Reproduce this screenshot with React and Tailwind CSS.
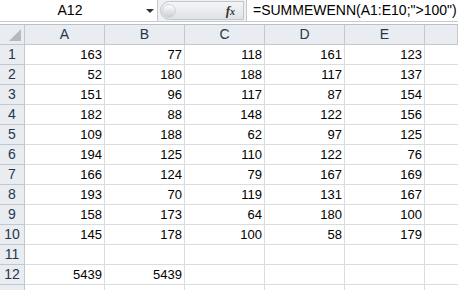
import React from "react";

const data = [
  [163, 77, 118, 161, 123],
  [52, 180, 188, 117, 137],
  [151, 96, 117, 87, 154],
  [182, 88, 148, 122, 156],
  [109, 188, 62, 97, 125],
  [194, 125, 110, 122, 76],
  [166, 124, 79, 167, 169],
  [193, 70, 119, 131, 167],
  [158, 173, 64, 180, 100],
  [145, 178, 100, 58, 179],
  [null, null, null, null, null],
  [5439, 5439, null, null, null],
  [null, null, null, null, null],
];

const cols = ["A", "B", "C", "D", "E", ""];

const App = () => {
  return (
    <div
      className="w-[458px] h-[290px] overflow-hidden bg-white text-[13px] text-black"
      style={{ fontFamily: '"Liberation Sans", Arial, sans-serif' }}
    >
      {/* Formula bar */}
      <div className="flex h-[22px] border-b border-[#c6c9cd]">
        <div className="relative w-[158px] bg-white border-r border-[#c6c9cd] flex items-center">
          <span className="w-[140px] text-center text-[14px]">A12</span>
          <span className="absolute left-[146px] top-[9px] w-0 h-0 border-l-[4px] border-r-[4px] border-t-[4px] border-l-transparent border-r-transparent border-t-[#333]"></span>
        </div>
        <div className="w-[88px] flex items-center bg-[#eef0f3]">
          <div className="ml-[2px] h-[19px] w-[84px] rounded-l-full bg-gradient-to-b from-[#f4f5f7] to-[#dfe2e6] border border-[#c2c6cc] flex items-center">
            <span className="ml-[1px] w-[14px] h-[14px] rounded-full bg-gradient-to-b from-[#ffffff] to-[#c9cdd3] border border-[#d0d3d8]"></span>
            <span
              className="ml-auto mr-[8px] italic font-bold text-[13px] text-[#333]"
              style={{ fontFamily: '"Liberation Serif", "Times New Roman", serif' }}
            >
              f<span className="text-[10px]">x</span>
            </span>
          </div>
        </div>
        <div className="flex-1 bg-white border-l border-[#c6c9cd] flex items-center pl-[6px] text-[14px]">
          =SUMMEWENN(A1:E10;"&gt;100")
        </div>
      </div>
      <div className="h-[3px] bg-white border-b border-[#b9c0c8]"></div>

      {/* Sheet */}
      <div className="grid grid-cols-[25px_80px_80px_80px_80px_80px_1fr] auto-rows-[20px]">
        <div className="bg-[#e9edf2] border-r border-b border-[#c4c8cd] flex items-end justify-end p-[3px]">
          <svg width="12" height="12" viewBox="0 0 12 12">
            <polygon points="12,0 12,12 0,12" fill="#b5bac1" />
          </svg>
        </div>
        {cols.map((c, i) => (
          <div
            key={i}
            className="bg-[#e9edf2] border-r border-b border-[#c4c8cd] flex items-center justify-center text-[14px] text-[#27364b]"
          >
            {c}
          </div>
        ))}
        {data.map((row, r) => (
          <React.Fragment key={r}>
            <div className="bg-[#e9edf2] border-r border-b border-[#c4c8cd] flex items-center justify-center text-[14px] text-[#27364b]">
              {r < 12 ? r + 1 : ""}
            </div>
            {row.map((v, c) => (
              <div
                key={c}
                className="border-r border-b border-[#dadcdd] flex items-center justify-end pr-[2px]"
              >
                {v}
              </div>
            ))}
            <div className="border-b border-[#dadcdd]"></div>
          </React.Fragment>
        ))}
      </div>
    </div>
  );
};

export default App;
